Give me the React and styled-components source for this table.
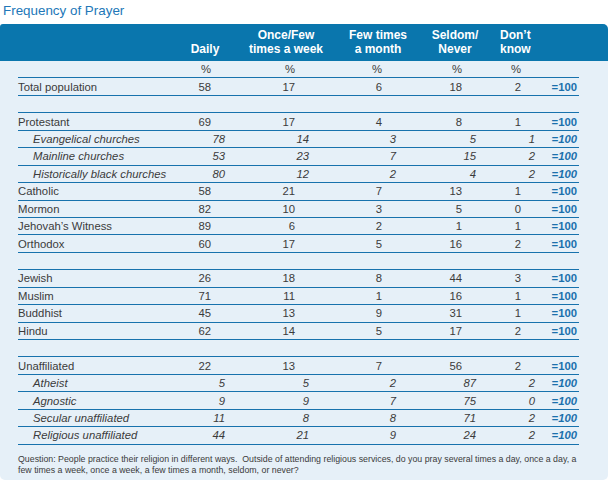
import React from 'react';
import styled, { createGlobalStyle } from 'styled-components';

const rows = [
  { label: 'Total population', values: [58, 17, 6, 18, 2] },
  null,
  { label: 'Protestant', values: [69, 17, 4, 8, 1] },
  { label: 'Evangelical churches', values: [78, 14, 3, 5, 1], sub: true },
  { label: 'Mainline churches', values: [53, 23, 7, 15, 2], sub: true },
  { label: 'Historically black churches', values: [80, 12, 2, 4, 2], sub: true },
  { label: 'Catholic', values: [58, 21, 7, 13, 1] },
  { label: 'Mormon', values: [82, 10, 3, 5, 0] },
  { label: 'Jehovah’s Witness', values: [89, 6, 2, 1, 1] },
  { label: 'Orthodox', values: [60, 17, 5, 16, 2] },
  null,
  { label: 'Jewish', values: [26, 18, 8, 44, 3] },
  { label: 'Muslim', values: [71, 11, 1, 16, 1] },
  { label: 'Buddhist', values: [45, 13, 9, 31, 1] },
  { label: 'Hindu', values: [62, 14, 5, 17, 2] },
  null,
  { label: 'Unaffiliated', values: [22, 13, 7, 56, 2] },
  { label: 'Atheist', values: [5, 5, 2, 87, 2], sub: true },
  { label: 'Agnostic', values: [9, 9, 7, 75, 0], sub: true },
  { label: 'Secular unaffiliated', values: [11, 8, 8, 71, 2], sub: true },
  { label: 'Religious unaffiliated', values: [44, 21, 9, 24, 2], sub: true },
];

const headers = [
  ['', 'Daily'],
  ['Once/Few', 'times a week'],
  ['Few times', 'a month'],
  ['Seldom/', 'Never'],
  ['Don’t', 'know'],
];

const App = () => {
  return (
    <Page>
      <GlobalStyle />
      <Title>Frequency of Prayer</Title>
      <Panel>
        <HeaderBand>
          <HeaderGrid>
            <span />
            {headers.map((h, i) => (
              <HeaderCell key={i} left={i === 4}>
                {h[0] || '\u00a0'}
                <br />
                {h[1]}
              </HeaderCell>
            ))}
          </HeaderGrid>
        </HeaderBand>
        <Table>
          <Row>
            <Label />
            {[0, 1, 2, 3, 4].map((i) => (
              <Num key={i}>%</Num>
            ))}
            <Total />
          </Row>
          {rows.map((row, i) =>
            row ? (
              <Row key={i}>
                <Label sub={row.sub}>{row.label}</Label>
                {row.values.map((v, j) => (
                  <Num key={j} sub={row.sub}>{v}</Num>
                ))}
                <Total sub={row.sub}>=100</Total>
              </Row>
            ) : (
              <Row key={i} />
            )
          )}
        </Table>
        <Note>
          Question: People practice their religion in different ways.&nbsp; Outside of attending religious services, do you pray several times a day, once a day, a
          <br />
          few times a week, once a week, a few times a month, seldom, or never?
        </Note>
      </Panel>
    </Page>
  );
};

const GlobalStyle = createGlobalStyle`
  body {
    margin: 0;
    background: #ffffff;
    font-family: "Liberation Sans", Arial, sans-serif;
  }
`;

const Page = styled.div`
  width: 609px;
`;

const Title = styled.h1`
  margin: 0;
  padding: 1px 0 0 3px;
  height: 23px;
  font-size: 13.4px;
  line-height: 20px;
  font-weight: normal;
  color: #2277b8;
`;

const Panel = styled.div`
  width: 608px;
  background: #e6f0f8;
  border-radius: 3px 5px 5px 5px;
  padding-bottom: 4px;
`;

const HeaderBand = styled.div`
  height: 37px;
  background: #0a76ad;
  border-radius: 3px 5px 0 0;
  box-sizing: border-box;
  padding: 5px 0 0 18px;
`;

const HeaderGrid = styled.div`
  display: grid;
  grid-template-columns: 152px 70px 92px 92px 62px 70px;
`;

const HeaderCell = styled.div`
  color: #ffffff;
  font-weight: bold;
  font-size: 12px;
  line-height: 13.5px;
  text-align: ${(p) => (p.left ? 'left' : 'center')};
  padding-left: ${(p) => (p.left ? '14px' : '0')};
`;

const Table = styled.div`
  padding: 0 29px 0 18px;
`;

const Row = styled.div`
  display: grid;
  grid-template-columns: 152px 56px 84px 87px 80px 59px 43px;
  height: 17.45px;
  box-sizing: border-box;
  border-bottom: 1px solid #1772ad;
  align-items: center;
  font-size: 11.3px;
  color: #3b3b3b;
`;

const Label = styled.div`
  padding-left: ${(p) => (p.sub ? '15px' : '0')};
  font-style: ${(p) => (p.sub ? 'italic' : 'normal')};
  white-space: nowrap;
`;

const Num = styled.div`
  text-align: right;
  padding-right: ${(p) => (p.sub ? '1px' : '15px')};
  font-style: ${(p) => (p.sub ? 'italic' : 'normal')};
`;

const Total = styled.div`
  text-align: right;
  padding-right: 2px;
  font-weight: bold;
  color: #1b70ad;
  font-style: ${(p) => (p.sub ? 'italic' : 'normal')};
`;

const Note = styled.p`
  margin: 0;
  padding: 9px 0 0 18px;
  font-size: 8.8px;
  line-height: 11px;
  color: #3b3b3b;
  white-space: nowrap;
`;

export default App;
